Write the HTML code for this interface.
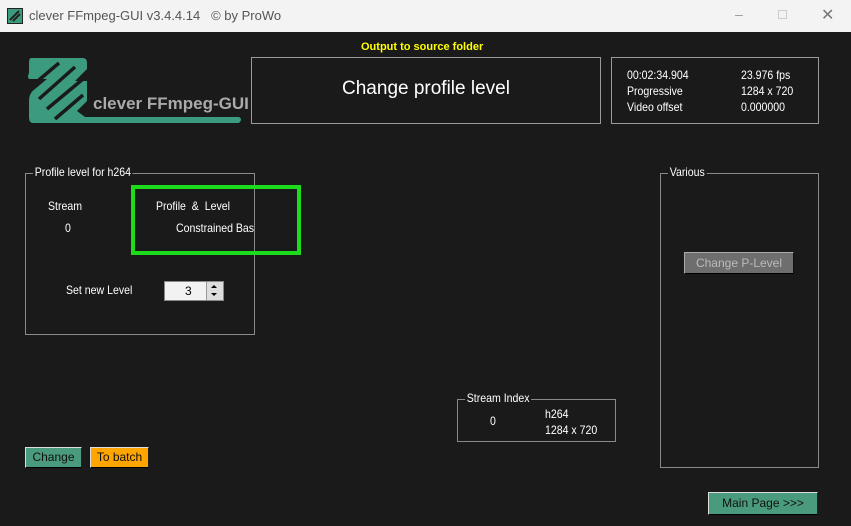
<!DOCTYPE html>
<html><head><meta charset="utf-8"><style>
*{margin:0;padding:0;box-sizing:border-box}
body{width:851px;height:526px;background:#1a1a1a;font-family:"Liberation Sans",sans-serif;color:#fff;position:relative;overflow:hidden;font-size:12px}
.a{position:absolute;white-space:nowrap}
.box{position:absolute;border:1px solid #9a9a9a}
.gb{position:absolute;border:1px solid #8a8a8a}
.lg{position:absolute;background:#1a1a1a;padding:0 2px;font-size:12px;top:-9px;left:7px}
.btn{position:absolute;text-align:center;font-size:12px;border:1px solid;border-color:#ddd #222 #000 #ddd}
.n{transform:scaleX(.88);transform-origin:left}
</style></head><body>
<div class="a" style="left:0;top:0;width:851px;height:32px;background:#f3f3f3"></div>
<svg class="a" style="left:7px;top:8px" width="16" height="16"><rect width="16" height="16" fill="#222"/><rect x="1" y="1" width="14" height="14" fill="#3c9a7e"/><path d="M3 12 L12 3 M6 13 L13 6" stroke="#222" stroke-width="2"/></svg>
<div class="a" style="left:29px;top:8px;color:#555;font-size:13px">clever FFmpeg-GUI v3.4.4.14 &nbsp; © by ProWo</div>
<div class="a" style="left:735px;top:6px;color:#999;font-size:14px">–</div>
<div class="a" style="left:778px;top:10px;width:9px;height:9px;border:1px solid #ccc"></div>
<div class="a" style="left:821px;top:5px;color:#777;font-size:16px">✕</div>

<svg class="a" style="left:25px;top:55px" width="220" height="72">
<g fill="#3c9a7e">
<path d="M6 3 H58 Q62 3 62 8 L62 14 L50 26 L62 26 Q62 36 62 46 L52 56 L60 62 H214 Q218 64 214 68 H8 Q4 68 4 62 L4 46 Q4 38 10 34 L22 24 L4 24 Q2 22 4 18 L4 8 Q4 3 6 3 Z"/>
</g>
<g stroke="#1a1a1a" stroke-width="3.5" fill="none">
<path d="M8 30 L34 8"/>
<path d="M14 44 L50 12"/>
<path d="M22 54 L58 24"/>
<path d="M30 64 L58 40"/>
</g>
</svg>
<div class="a" style="left:93px;top:94px;color:#aaa;font-size:17px;font-weight:bold">clever FFmpeg-GUI</div>

<div class="a" style="left:361px;top:41px;color:#ffff00;font-weight:bold;font-size:11px">Output to source folder</div>
<div class="box" style="left:251px;top:57px;width:350px;height:67px"></div>
<div class="a" style="left:251px;top:78px;width:350px;text-align:center;font-size:19px">Change profile level</div>

<div class="box" style="left:611px;top:57px;width:208px;height:67px"></div>
<div class="a n" style="left:627px;top:67px;line-height:16px">00:02:34.904<br>Progressive<br>Video offset</div>
<div class="a n" style="left:741px;top:67px;line-height:16px">23.976 fps<br>1284 x 720<br>0.000000</div>

<div class="gb" style="left:25px;top:173px;width:230px;height:162px"><div class="lg n">Profile level for h264</div></div>
<div class="a n" style="left:48px;top:199px">Stream</div>
<div class="a n" style="left:65px;top:221px">0</div>
<div class="a n" style="left:156px;top:199px">Profile &nbsp;&amp; &nbsp;Level</div>
<div class="a n" style="left:176px;top:221px">Constrained Bas</div>
<div class="a" style="left:131px;top:185px;width:170px;height:70px;border:4px solid #1cdc1c"></div>
<div class="a n" style="left:66px;top:283px">Set new Level</div>
<div class="a" style="left:164px;top:281px;width:60px;height:20px;background:#f2f2f2;border:1px solid #888;color:#000;font-size:12px;padding:2px 0 0 20px">3</div>
<div class="a" style="left:206px;top:282px;width:17px;height:18px;background:#ddd;border-left:1px solid #999"></div>
<div class="a" style="left:211px;top:285px;width:0;height:0;border:3px solid transparent;border-bottom:3px solid #000;border-top:0"></div>
<div class="a" style="left:211px;top:293px;width:0;height:0;border:3px solid transparent;border-top:3px solid #000;border-bottom:0"></div>

<div class="gb" style="left:660px;top:173px;width:159px;height:295px"><div class="lg n">Various</div></div>
<div class="btn" style="left:684px;top:252px;width:110px;height:22px;background:#6e6e6e;color:#bbb;line-height:20px;border-color:#aaa #111 #000 #aaa">Change P-Level</div>

<div class="gb" style="left:457px;top:399px;width:159px;height:43px"><div class="lg n">Stream Index</div></div>
<div class="a n" style="left:490px;top:414px">0</div>
<div class="a n" style="left:545px;top:406px;line-height:16px">h264<br>1284 x 720</div>

<div class="btn" style="left:25px;top:447px;width:57px;height:21px;background:#4a9a7e;color:#111;line-height:19px">Change</div>
<div class="btn" style="left:90px;top:447px;width:59px;height:21px;background:#ffa500;color:#111;line-height:19px">To batch</div>
<div class="btn" style="left:708px;top:492px;width:110px;height:23px;background:#4a9a7e;color:#111;line-height:21px">Main Page &gt;&gt;&gt;</div>
</body></html>
